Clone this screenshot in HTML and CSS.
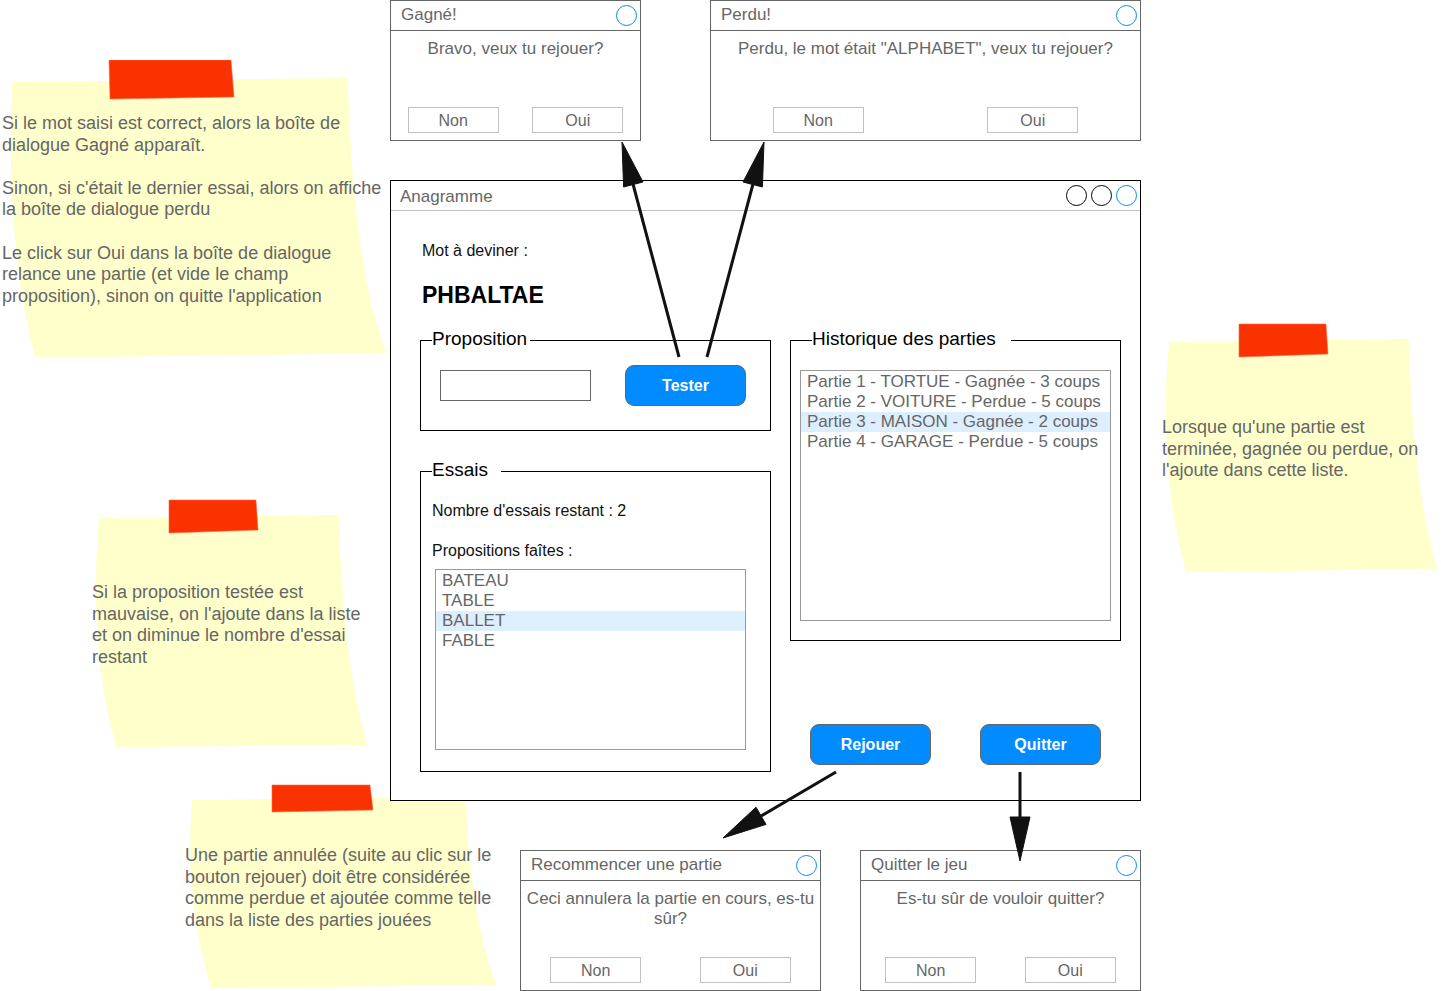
FILE: index.html
```html
<!DOCTYPE html>
<html lang="fr">
<head>
<meta charset="utf-8">
<title>Anagramme - maquette</title>
<link rel="stylesheet" href="styles.css">
</head>
<body>
<div class="canvas">

  <div class="note note-1">
    <svg class="note-bg" width="390" height="300" viewBox="0 0 390 300"><path class="paper" d="M12,22 L348,18 Q352,200 386,293 L35,298 Q5,180 12,22 Z"/><polygon class="tape" points="109,0 231,0 234,37 110,39"/></svg>
    <div class="note-text">
      <p>Si le mot saisi est correct, alors la boîte de<br>dialogue Gagné apparaît.</p>
      <p>Sinon, si c'était le dernier essai, alors on affiche<br>la boîte de dialogue perdu</p>
      <p>Le click sur Oui dans la boîte de dialogue<br>relance une partie (et vide le champ<br>proposition), sinon on quitte l'application</p>
    </div>
  </div>

  <div class="note note-2">
    <svg class="note-bg" width="291" height="260" viewBox="0 0 291 260"><path class="paper" d="M19,22 L259,19 Q262,160 287,249 L36,252 Q8,150 19,22 Z"/><polygon class="tape" points="89,4 176,4 178,34 89,37"/></svg>
    <div class="note-text">
      <p>Lorsque qu'une partie est<br>terminée, gagnée ou perdue, on<br>l'ajoute dans cette liste.</p>
    </div>
  </div>

  <div class="note note-3">
    <svg class="note-bg" width="300" height="260" viewBox="0 0 300 260"><path class="paper" d="M19,23 L259,20 Q262,160 287,250 L36,252 Q8,150 19,23 Z"/><polygon class="tape" points="89,5 176,5 178,35 89,38"/></svg>
    <div class="note-text">
      <p>Si la proposition testée est<br>mauvaise, on l'ajoute dans la liste<br>et on diminue le nombre d'essai<br>restant</p>
    </div>
  </div>

  <div class="note note-4">
    <svg class="note-bg" width="320" height="211" viewBox="0 0 320 211"><path class="paper" d="M12,20 L286,17 Q289,130 316,205 L31,208 Q4,120 12,20 Z"/><polygon class="tape" points="92,5 190,5 193,30 92,32"/></svg>
    <div class="note-text">
      <p>Une partie annulée (suite au clic sur le<br>bouton rejouer) doit être considérée<br>comme perdue et ajoutée comme telle<br>dans la liste des parties jouées</p>
    </div>
  </div>

  <section class="window dialog dlg-gagne">
    <header class="win-title"><span>Gagné!</span><span class="dots"><i class="dot blue"></i></span></header>
    <div class="dlg-body">Bravo, veux tu rejouer?</div>
    <div class="dlg-actions"><button class="dlg-btn">Non</button><button class="dlg-btn">Oui</button></div>
  </section>

  <section class="window dialog dlg-perdu">
    <header class="win-title"><span>Perdu!</span><span class="dots"><i class="dot blue"></i></span></header>
    <div class="dlg-body">Perdu, le mot était "ALPHABET", veux tu rejouer?</div>
    <div class="dlg-actions"><button class="dlg-btn">Non</button><button class="dlg-btn">Oui</button></div>
  </section>

  <section class="window app">
    <header class="win-title"><span>Anagramme</span><span class="dots"><i class="dot"></i><i class="dot"></i><i class="dot blue"></i></span></header>
    <div class="app-body">
      <div class="label">Mot à deviner :</div>
      <div class="word">PHBALTAE</div>
      <div class="app-grid">
        <div class="col col-left">
          <fieldset class="group grp-prop">
            <legend>Proposition</legend>
            <div class="prop-row">
              <input class="text-input" type="text" aria-label="Proposition">
              <button class="btn-primary">Tester</button>
            </div>
          </fieldset>
          <fieldset class="group grp-essais">
            <legend>Essais</legend>
            <div class="essais-inner">
              <div class="label">Nombre d'essais restant : 2</div>
              <div class="label label-gap">Propositions faîtes :</div>
              <ul class="listbox essais-list">
                <li>BATEAU</li>
                <li>TABLE</li>
                <li class="sel">BALLET</li>
                <li>FABLE</li>
              </ul>
            </div>
          </fieldset>
        </div>
        <div class="col col-right">
          <fieldset class="group grp-hist">
            <legend>Historique des parties</legend>
            <div class="hist-inner">
              <ul class="listbox hist-list">
                <li>Partie 1 - TORTUE - Gagnée - 3 coups</li>
                <li>Partie 2 - VOITURE - Perdue - 5 coups</li>
                <li class="sel">Partie 3 - MAISON - Gagnée - 2 coups</li>
                <li>Partie 4 - GARAGE - Perdue - 5 coups</li>
              </ul>
            </div>
          </fieldset>
          <div class="actions">
            <button class="btn-primary">Rejouer</button>
            <button class="btn-primary">Quitter</button>
          </div>
        </div>
      </div>
    </div>
  </section>

  <section class="window dialog dlg-recommencer">
    <header class="win-title"><span>Recommencer une partie</span><span class="dots"><i class="dot blue"></i></span></header>
    <div class="dlg-body">Ceci annulera la partie en cours, es-tu<br>sûr?</div>
    <div class="dlg-actions"><button class="dlg-btn">Non</button><button class="dlg-btn">Oui</button></div>
  </section>

  <section class="window dialog dlg-quitter">
    <header class="win-title"><span>Quitter le jeu</span><span class="dots"><i class="dot blue"></i></span></header>
    <div class="dlg-body">Es-tu sûr de vouloir quitter?</div>
    <div class="dlg-actions"><button class="dlg-btn">Non</button><button class="dlg-btn">Oui</button></div>
  </section>

  <svg class="arrows" width="1441" height="991" viewBox="0 0 1441 991">
    <g class="shaft">
      <line x1="679" y1="357" x2="633" y2="184"/>
      <line x1="707" y1="357" x2="753" y2="184"/>
      <line x1="836" y1="772" x2="761" y2="816"/>
      <line x1="1020" y1="772" x2="1020" y2="817"/>
    </g>
    <g class="head">
      <polygon points="622,142 643,182 623.6,187"/>
      <polygon points="764,142 762.4,187 743,182"/>
      <polygon points="723,838 766,824.4 756,807.2"/>
      <polygon points="1020,861 1010,817 1030,817"/>
    </g>
  </svg>

</div>
</body>
</html>
```

FILE: styles.css
```css
* { box-sizing: border-box; }

html, body {
  margin: 0;
  background: #fff;
}

body {
  font-family: "Liberation Sans", Arial, sans-serif;
}

.canvas {
  position: relative;
  width: 1441px;
  height: 991px;
  overflow: hidden;
}

/* Sticky notes */
.note { position: absolute; }
.note-bg { position: absolute; left: 0; top: 0; }
.paper { fill: #ffffcc; }
.tape { fill: #f93200; stroke: #fb6a4a; stroke-width: 0.6; }

.note-text {
  position: relative;
  font-size: 18px;
  line-height: 21.6px;
  color: #666;
  white-space: nowrap;
}
.note-text p { margin: 0; }
.note-text p + p { margin-top: 21.6px; }

.note-1 { left: 0; top: 60px; width: 390px; height: 300px; }
.note-1 .note-text { padding: 53px 0 0 2px; }
.note-2 { left: 1150px; top: 320px; width: 291px; height: 260px; }
.note-2 .note-text { padding: 97px 0 0 12px; }
.note-3 { left: 80px; top: 495px; width: 300px; height: 260px; }
.note-3 .note-text { padding: 87px 0 0 12px; }
.note-4 { left: 180px; top: 780px; width: 320px; height: 211px; }
.note-4 .note-text { padding: 65px 0 0 5px; }

/* Windows */
.window {
  position: absolute;
  background: #fff;
  border: 1px solid #000;
  display: flex;
  flex-direction: column;
}

.win-title {
  flex: none;
  height: 30px;
  display: flex;
  align-items: center;
  justify-content: space-between;
  padding: 2px 3px 0 9px;
  border-bottom: 1px solid #c0c0c0;
  font-size: 17px;
  color: #666;
  white-space: nowrap;
}

.dots { display: flex; gap: 4px; margin-top: -2px; }
.dot {
  display: block;
  width: 21px;
  height: 21px;
  border-radius: 50%;
  border: 1px solid #000;
}
.dot.blue { border-color: #008cff; }

/* Dialogs */
.dialog { border-color: #666; height: 141px; top: 0; }
.dialog .win-title { border-bottom-color: #666; padding: 0 3px 2px 10px; }
.dialog .dots { margin-top: 2px; }
.dlg-gagne { left: 390px; width: 251px; }
.dlg-perdu { left: 710px; width: 431px; }
.dlg-recommencer { left: 520px; top: 850px; width: 301px; }
.dlg-quitter { left: 860px; top: 850px; width: 281px; }

.dlg-body {
  flex: 1;
  padding: 8px 4px 0;
  text-align: center;
  font-size: 17px;
  line-height: 20px;
  color: #666;
}

.dlg-actions {
  display: flex;
  justify-content: space-around;
  padding-bottom: 7px;
}

.dlg-btn {
  width: 91px;
  height: 26px;
  padding: 2px 0 0;
  border: 1px solid #c0c0c0;
  background: #fff;
  color: #666;
  font-family: "Liberation Sans", Arial, sans-serif;
  font-size: 16px;
}

/* Main app window */
.app { left: 390px; top: 180px; width: 751px; height: 621px; }

.app-body { padding: 30px 0 0 29px; }

.label {
  font-size: 16px;
  line-height: 20px;
  color: #111;
  white-space: nowrap;
}
.app-body > .label { padding-left: 2px; }

.word {
  margin: 20px 0 19px;
  padding-left: 2px;
  font-size: 23px;
  line-height: 28px;
  font-weight: bold;
  color: #000;
}

.app-grid {
  display: grid;
  grid-template-columns: 351px 331px;
  column-gap: 19px;
  align-items: start;
}

.col { display: flex; flex-direction: column; }
.col-left { gap: 28px; }

.group {
  margin: 0;
  padding: 0;
  min-width: 0;
  border: 1px solid #000;
}
.group legend {
  position: relative;
  top: -1px;
  margin-left: 11px;
  padding: 0 3px 0 0;
  font-size: 19px;
  line-height: 24px;
  color: #000;
}
.grp-essais legend { padding-right: 13px; }
.grp-hist legend { margin-left: 21px; padding-right: 15px; }

.prop-row {
  display: flex;
  align-items: center;
  justify-content: space-between;
  padding: 13px 24px 24px 19px;
}

.text-input {
  width: 151px;
  height: 31px;
  margin: 0;
  border: 1px solid #666;
  background: #fff;
}

.btn-primary {
  width: 121px;
  height: 41px;
  padding: 0;
  border: 1px solid #666;
  border-radius: 9px;
  background: #008cff;
  color: #fff;
  font-family: "Liberation Sans", Arial, sans-serif;
  font-size: 16px;
  font-weight: bold;
}

.essais-inner { padding: 18px 24px 21px 11px; }
.label-gap { margin-top: 20px; }

.listbox {
  margin: 0;
  padding: 1px 0 0;
  list-style: none;
  border: 1px solid #999;
  font-size: 17px;
  line-height: 20px;
  color: #666;
}
.listbox li { padding-left: 6px; white-space: nowrap; }
.listbox .sel { background: #ddeeff; }

.essais-list { margin: 8px 0 0 3px; height: 181px; }

.hist-inner { padding: 18px 9px 19px 9px; }
.hist-list { height: 251px; }

.actions {
  display: flex;
  justify-content: space-between;
  padding: 0 20px;
  margin-top: 83px;
}

/* Connectors */
.arrows {
  position: absolute;
  left: 0;
  top: 0;
  pointer-events: none;
}
.arrows .shaft line { stroke: #111; stroke-width: 3; }
.arrows .head polygon { fill: #111; stroke: #111; stroke-width: 1; }
```
